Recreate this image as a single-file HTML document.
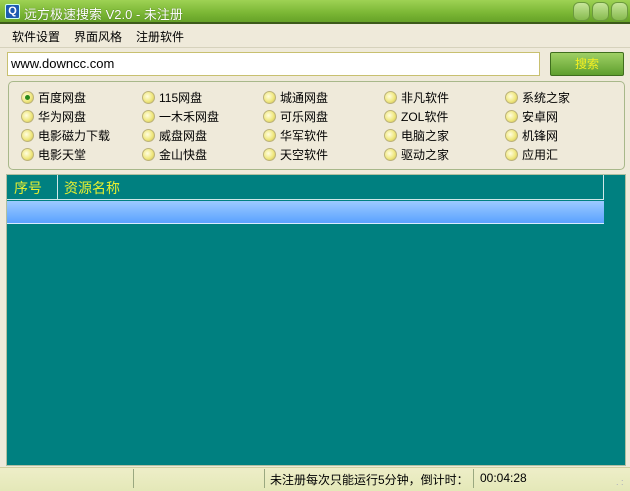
<!DOCTYPE html>
<html><head><meta charset="utf-8"><style>
*{margin:0;padding:0;box-sizing:border-box}
body{width:630px;height:491px;overflow:hidden;background:#efeada;font-family:"Liberation Sans","Noto Sans CJK SC",sans-serif;font-size:12px;color:#000;position:relative}
.a{position:absolute}
#title{left:0;top:0;width:630px;height:24px;background:linear-gradient(#9ed254,#7ab634 60%,#66a228);border-bottom:2px solid #3c5a1a}
#title .t{left:24px;top:4px;color:#fff;font-size:13px;text-shadow:0 0 1px #3a6010}
#icon{left:5px;top:4px;width:15px;height:15px;background:#1d5bb0;border-radius:2px;border:1px solid #cfe;color:#fff;font-size:11px;font-weight:bold;line-height:13px;text-align:center}
.wb{top:2px;width:17px;height:19px;border-radius:6px;background:linear-gradient(#c7e59a,#86ba4e);border:1px solid #6c9a3e}
#menu span{position:absolute;top:28px;font-size:12px}
#inp{left:7px;top:52px;width:533px;height:24px;background:#fff;border:1px solid #c8c070;padding:3px 3px;font-size:13px}
#btn{left:550px;top:52px;width:74px;height:24px;background:linear-gradient(#9fd065,#5f9f2e);border:1px solid #3f6e1e;border-radius:2px;color:#f5f020;text-align:center;line-height:22px;font-size:12px}
#grp{left:8px;top:81px;width:617px;height:89px;border:1px solid #a8b88a;border-radius:5px}
.r{position:absolute;height:16px;line-height:16px;font-size:12px}
.r i{position:absolute;left:-17px;top:1px;width:13px;height:13px;border-radius:50%;background:radial-gradient(circle at 40% 40%,#fffde0,#f0e880 55%,#c8b84a);border:1px solid #bbb27a}
.r i.on::after{content:"";position:absolute;left:3px;top:3px;width:5px;height:5px;border-radius:50%;background:#2a8a1a}
#tbl{left:6px;top:174px;width:620px;height:292px;background:#008080;border:1px solid #b0c0a0}
#hd{left:7px;top:175px;width:597px;height:25px;border-bottom:1px solid #d0e8e8;border-right:1px solid #d0e8e8;color:#e8f030;font-size:14px}
#sel{left:7px;top:201px;width:597px;height:23px;background:linear-gradient(#9ccaff,#5aa2ff);border-bottom:1px solid #d8ecff}
#st{left:0;top:467px;width:630px;height:24px;background:linear-gradient(#eeeec8,#e4e8b8);border-top:1px solid #d0d0a0}
.sd{top:469px;width:1px;height:19px;background:#9aa880}
</style></head><body>
<div id="title" class="a"><div id="icon" class="a">Q</div><div class="t a">远方极速搜索 V2.0 - 未注册</div>
<div class="a wb" style="left:573px"></div><div class="a wb" style="left:592px"></div><div class="a wb" style="left:611px"></div></div>
<div id="menu"><span style="left:12px">软件设置</span><span style="left:74px">界面风格</span><span style="left:136px">注册软件</span></div>
<div style="position:absolute;left:0;top:47px;width:630px;height:1px;background:#d6d2bc"></div>
<div id="inp" class="a">www.downcc.com</div>
<div id="btn" class="a">搜索</div>
<div id="grp" class="a"></div>
<div class="r" style="left:38px;top:90px"><i class="on"></i>百度网盘</div>
<div class="r" style="left:159px;top:90px"><i></i>115网盘</div>
<div class="r" style="left:280px;top:90px"><i></i>城通网盘</div>
<div class="r" style="left:401px;top:90px"><i></i>非凡软件</div>
<div class="r" style="left:522px;top:90px"><i></i>系统之家</div>
<div class="r" style="left:38px;top:109px"><i></i>华为网盘</div>
<div class="r" style="left:159px;top:109px"><i></i>一木禾网盘</div>
<div class="r" style="left:280px;top:109px"><i></i>可乐网盘</div>
<div class="r" style="left:401px;top:109px"><i></i>ZOL软件</div>
<div class="r" style="left:522px;top:109px"><i></i>安卓网</div>
<div class="r" style="left:38px;top:128px"><i></i>电影磁力下载</div>
<div class="r" style="left:159px;top:128px"><i></i>威盘网盘</div>
<div class="r" style="left:280px;top:128px"><i></i>华军软件</div>
<div class="r" style="left:401px;top:128px"><i></i>电脑之家</div>
<div class="r" style="left:522px;top:128px"><i></i>机锋网</div>
<div class="r" style="left:38px;top:147px"><i></i>电影天堂</div>
<div class="r" style="left:159px;top:147px"><i></i>金山快盘</div>
<div class="r" style="left:280px;top:147px"><i></i>天空软件</div>
<div class="r" style="left:401px;top:147px"><i></i>驱动之家</div>
<div class="r" style="left:522px;top:147px"><i></i>应用汇</div>
<div id="tbl" class="a"></div>
<div id="hd" class="a"><span class="a" style="left:7px;top:3px">序号</span><span class="a" style="left:57px;top:3px">资源名称</span>
<div class="a" style="left:50px;top:0;width:1px;height:25px;background:#d0e8e8"></div></div>
<div id="sel" class="a"></div>
<div id="st" class="a"></div>
<div class="a sd" style="left:133px"></div><div class="a sd" style="left:264px"></div><div class="a sd" style="left:473px"></div>
<div class="a" style="left:270px;top:471px">未注册每次只能运行5分钟，倒计时：</div>
<div class="a" style="left:480px;top:471px">00:04:28</div>
<div class="a" style="left:616px;top:476px;color:#aab;font-size:9px;line-height:4px">&nbsp;&nbsp;.<br>. .</div>
</body></html>
